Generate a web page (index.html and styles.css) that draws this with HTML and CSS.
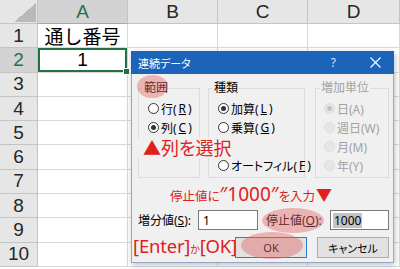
FILE: index.html
```html
<!DOCTYPE html>
<html lang="ja">
<head>
    <meta charset="utf-8">
    <title>連続データ</title>
    <link rel="stylesheet" href="styles.css">
</head>
<body>
    <div class="sheet">
        <div class="corner"></div>
        <div class="col-head active">A</div>
        <div class="col-head">B</div>
        <div class="col-head">C</div>
        <div class="col-head">D</div>

        <div class="row-head">1</div>
        <div class="cell title-cell">通し番号</div>
        <div class="cell"></div><div class="cell"></div><div class="cell"></div>

        <div class="row-head active">2</div>
        <div class="cell selected">1</div>
        <div class="cell"></div><div class="cell"></div><div class="cell"></div>

        <div class="row-head">3</div>
        <div class="cell"></div><div class="cell"></div><div class="cell"></div><div class="cell"></div>
        <div class="row-head">4</div>
        <div class="cell"></div><div class="cell"></div><div class="cell"></div><div class="cell"></div>
        <div class="row-head">5</div>
        <div class="cell"></div><div class="cell"></div><div class="cell"></div><div class="cell"></div>
        <div class="row-head">6</div>
        <div class="cell"></div><div class="cell"></div><div class="cell"></div><div class="cell"></div>
        <div class="row-head">7</div>
        <div class="cell"></div><div class="cell"></div><div class="cell"></div><div class="cell"></div>
        <div class="row-head">8</div>
        <div class="cell"></div><div class="cell"></div><div class="cell"></div><div class="cell"></div>
        <div class="row-head">9</div>
        <div class="cell"></div><div class="cell"></div><div class="cell"></div><div class="cell"></div>
        <div class="row-head">10</div>
        <div class="cell"></div><div class="cell"></div><div class="cell"></div><div class="cell"></div>
    </div>

    <!-- 連続データ dialog -->
    <div class="dialog">
        <div class="title-bar">
            <span class="title">連続データ</span>
            <span class="help">?</span>
            <svg class="close" width="11" height="11" viewBox="0 0 11 11">
                <path d="M0.5 0.5 L10.5 10.5 M10.5 0.5 L0.5 10.5" stroke="#ffffff" stroke-width="1.1" fill="none"/>
            </svg>
        </div>

        <div class="dialog-body">
            <div class="groups">
                <fieldset class="group group-range">
                    <legend class="mark-range">範囲</legend>
                    <div class="radio"><span class="dot"></span>行(<u>R</u>)</div>
                    <div class="radio checked"><span class="dot"></span>列(<u>C</u>)</div>
                </fieldset>
                <fieldset class="group group-type">
                    <legend>種類</legend>
                    <div class="radio checked"><span class="dot"></span>加算(<u>L</u>)</div>
                    <div class="radio"><span class="dot"></span>乗算(<u>G</u>)</div>
                    <div class="radio blank"></div>
                    <div class="radio"><span class="dot"></span>オートフィル(<u>F</u>)</div>
                </fieldset>
                <fieldset class="group group-unit disabled">
                    <legend>増加単位</legend>
                    <div class="radio checked"><span class="dot"></span>日(A)</div>
                    <div class="radio"><span class="dot"></span>週日(W)</div>
                    <div class="radio"><span class="dot"></span>月(M)</div>
                    <div class="radio"><span class="dot"></span>年(Y)</div>
                </fieldset>
            </div>

            <p class="note-stop">停止値に<span class="big">″1000″</span>を入力<span class="down">▼</span></p>

            <div class="field-row">
                <span class="field-label">増分値(<u>S</u>):</span>
                <span class="input input-step">1</span>
                <span class="field-label stop-label">停止値(<u>O</u>):</span>
                <span class="input input-stop"><span class="sel">1000</span></span>
            </div>

            <div class="button-row">
                <p class="note-enter">[Enter]<small>か</small>[OK]</p>
                <button class="btn btn-default"><span>OK</span></button>
                <button class="btn btn-cancel">キャンセル</button>
            </div>
        </div>

        <p class="note-select">▲列を選択</p>
    </div>
</body>
</html>
```

FILE: styles.css
```css
body {
    margin: 0;
    background-color: #ffffff;
    font-family: "Liberation Sans", Arial, sans-serif;
    overflow: hidden;
}

/* spreadsheet */
.sheet {
    display: grid;
    grid-template-columns: 38px 90px 90px 90px 92px;
    grid-template-rows: 24px repeat(10, 24.3px);
}

.sheet > div {
    box-sizing: border-box;
    display: flex;
    align-items: center;
    justify-content: center;
    border-right: 1px solid #d9d9d9;
    border-bottom: 1px solid #d9d9d9;
    font-size: 19px;
    color: #000000;
}

.sheet > .corner,
.sheet > .col-head,
.sheet > .row-head {
    background-color: #e6e6e6;
    border-color: #c4c4c4;
    color: #262626;
}

.sheet > .corner {
    background-image: linear-gradient(to bottom right, transparent 50%, #b9b9b9 50%);
    background-repeat: no-repeat;
    background-size: 22px 19px;
    background-position: right 1px bottom 1px;
}

.sheet > .active {
    background-color: #d3d3d3;
    color: #217346;
}

.sheet > .col-head.active {
    border-bottom-color: #a9a9a9;
}

.title-cell {
    font-family: "Noto Sans CJK JP", sans-serif;
    font-size: 19px;
}

.sheet > .selected {
    position: relative;
    box-shadow: inset 0 0 0 2px #217346;
}

.selected::after {
    content: "";
    position: absolute;
    right: -3px;
    bottom: -3px;
    width: 5px;
    height: 5px;
    background-color: #217346;
    border: 1px solid #ffffff;
}

/* dialog */
.dialog {
    position: absolute;
    left: 131px;
    top: 51px;
    width: 263px;
    height: 212px;
    box-sizing: border-box;
    display: flex;
    flex-direction: column;
    border: 1px solid #8ea9cc;
    background-color: #f0f0f0;
    box-shadow: 1px 2px 6px rgba(0, 0, 0, 0.25);
    font-family: "Noto Sans", "Noto Sans CJK JP", sans-serif;
    font-size: 12px;
    color: #000000;
    font-feature-settings: "palt";
}

.title-bar {
    height: 23px;
    margin: -1px -1px 0;
    display: flex;
    align-items: center;
    padding: 0 13px 0 7px;
    background-color: #1b64b9;
    color: #ffffff;
}

.title {
    font-size: 11px;
}

.help {
    margin-left: auto;
    margin-right: 34px;
    font-size: 12px;
    color: #d6e3f3;
}

.dialog-body {
    flex: 1;
    display: flex;
    flex-direction: column;
    padding: 6px 4px 4px 6px;
}

.groups {
    display: flex;
    height: 98px;
}

.group {
    margin: 0;
    padding: 3px 0 2px 0;
    border: 1px solid #dcdcdc;
    box-sizing: border-box;
    min-width: 0;
    flex-shrink: 0;
}

.group legend {
    margin-left: 4px;
    padding: 0 1px;
    line-height: 16px;
}

.group-range { width: 62px; }
.group-type { width: 97px; margin-left: 8px; }
.group-unit { width: 74px; margin-left: 10px; }

.radio {
    display: flex;
    align-items: center;
    gap: 2px;
    height: 19px;
    padding-left: 9px;
    white-space: nowrap;
}

.dot {
    flex-shrink: 0;
    width: 11px;
    height: 11px;
    box-sizing: border-box;
    border: 1px solid #333333;
    border-radius: 50%;
    background-color: #ffffff;
    display: flex;
    align-items: center;
    justify-content: center;
}

.checked .dot::after {
    content: "";
    width: 5px;
    height: 5px;
    border-radius: 50%;
    background-color: #333333;
}

.disabled {
    color: #a3a3a3;
}

.group-unit .radio {
    padding-left: 8px;
}

.disabled .dot {
    border-color: #dedede;
    background-color: #e6e6e6;
}

.disabled .checked .dot::after {
    background-color: #c2c2c2;
}

u {
    text-decoration-thickness: 1px;
    text-underline-offset: 1px;
}

/* pink highlights */
.mark-range,
.stop-label,
.btn-default span {
    position: relative;
}

.mark-range::after,
.stop-label::after,
.btn-default span::after {
    content: "";
    position: absolute;
    border-radius: 50%;
    background-color: rgba(228, 98, 98, 0.42);
}

.mark-range::after {
    left: -6px;
    top: -5px;
    width: 31px;
    height: 23px;
}

.stop-label::after {
    left: -4px;
    top: -3px;
    width: 62px;
    height: 25px;
}

/* red notes */
.note-stop,
.note-select,
.note-enter {
    margin: 0;
    color: #e0201b;
    font-family: "Noto Sans", "Noto Sans CJK JP", sans-serif;
    white-space: nowrap;
}

.note-stop {
    height: 32px;
    box-sizing: border-box;
    padding: 7px 0 0 32px;
    font-size: 12.5px;
    line-height: 18px;
}

.note-stop .big {
    font-size: 19px;
}

.note-stop .down {
    font-size: 16px;
    margin-left: 1px;
}

.note-select {
    position: absolute;
    left: 5px;
    top: 86px;
    width: 163px;
    height: 20px;
    box-sizing: border-box;
    padding-left: 6px;
    background-color: #f0f0f0;
    font-size: 18px;
    line-height: 20px;
}

.note-enter {
    flex-shrink: 0;
    width: 102px;
    margin-left: -5px;
    font-size: 18.5px;
    letter-spacing: -0.2px;
    line-height: 21px;
}

.note-enter small {
    font-size: 10px;
}

/* fields */
.field-row {
    display: flex;
    align-items: center;
    height: 20px;
}

.field-label {
    white-space: nowrap;
}

.field-label:first-child {
    width: 60px;
}

.stop-label {
    width: 64px;
    margin-left: 8px;
}

.input {
    box-sizing: border-box;
    height: 20px;
    display: flex;
    align-items: center;
    border: 1px solid #7a7a7a;
    background-color: #ffffff;
}

.input-step {
    width: 60px;
    padding-left: 4px;
}

.input-stop {
    width: 59px;
    padding-left: 2px;
}

.sel {
    background-color: #c3c3c3;
    padding: 0 1px;
    line-height: 15px;
}

/* buttons */
.button-row {
    display: flex;
    align-items: center;
    height: 21px;
    margin-top: 7px;
}

.btn {
    flex-shrink: 0;
    width: 72px;
    height: 21px;
    padding: 0;
    border: 1px solid #adadad;
    background-color: #e1e1e1;
    font-family: "Noto Sans", "Noto Sans CJK JP", sans-serif;
    font-size: 11px;
    font-feature-settings: "palt";
    color: #000000;
}

.btn-default {
    margin-left: auto;
    border-color: #2f7bd1;
}

.btn-cancel {
    margin-left: 10px;
}

.btn-default span::after {
    left: -22px;
    top: -8px;
    width: 62px;
    height: 27px;
}
```
